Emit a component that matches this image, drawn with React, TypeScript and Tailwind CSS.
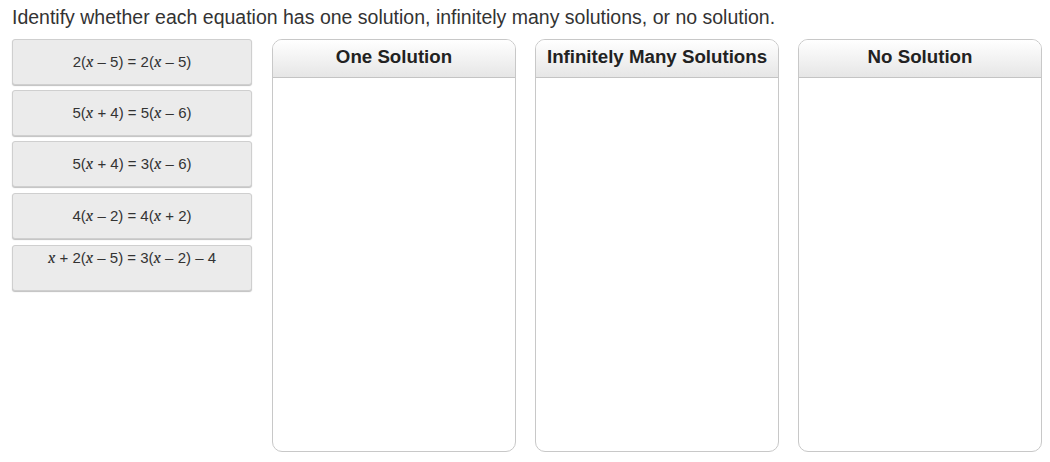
import React from "react";

type Part = string | { v: string };

const X = { v: "x" };

const equations: Part[][] = [
  ["2(", X, " – 5) = 2(", X, " – 5)"],
  ["5(", X, " + 4) = 5(", X, " – 6)"],
  ["5(", X, " + 4) = 3(", X, " – 6)"],
  ["4(", X, " – 2) = 4(", X, " + 2)"],
  [X, " + 2(", X, " – 5) = 3(", X, " – 2) – 4"],
];

const columns = ["One Solution", "Infinitely Many Solutions", "No Solution"];

const Equation: React.FC<{ parts: Part[] }> = ({ parts }) => (
  <span>
    {parts.map((p, i) =>
      typeof p === "string" ? (
        <span key={i}>{p}</span>
      ) : (
        <i key={i} className="font-serif italic text-[16.5px]">
          {p.v}
        </i>
      )
    )}
  </span>
);

const App: React.FC = () => {
  return (
    <div className="w-[1050px] h-[462px] bg-white px-3 pt-[6px] [font-family:'Liberation_Sans',Arial,sans-serif] text-[#333]">
      {/* Prompt */}
      <p className="text-[19.5px] leading-[22px]">
        Identify whether each equation has one solution, infinitely many solutions, or no solution.
      </p>

      <div className="mt-[11px] flex">
        {/* Draggable equation tiles */}
        <div className="flex w-[240px] shrink-0 flex-col gap-[5px]">
          {equations.map((eq, i) => (
            <div
              key={i}
              className={`h-[46px] rounded-[3px] border border-[#cfcfcf] bg-[#ebebeb] text-[15px] shadow-[0_1px_1px_rgba(0,0,0,0.25)] flex justify-center ${
                i === 4 ? "mt-px items-start" : "items-center"
              } ${i === 3 ? "mt-px" : ""}`}
            >
              <Equation parts={eq} />
            </div>
          ))}
        </div>

        {/* Drop targets */}
        <div className="ml-[20px] flex shrink-0 gap-[19px]">
          {columns.map((c) => (
            <div
              key={c}
              className="flex h-[413px] w-[244px] shrink-0 flex-col overflow-hidden rounded-[10px] border border-[#c8c8c8] bg-white"
            >
              <div className="flex h-[38px] items-center justify-center border-b border-[#c4c4c4] bg-gradient-to-b from-white to-[#e6e6e6] pb-[2px] text-[18.7px] font-bold text-[#222]">
                {c}
              </div>
              <div className="flex-1" />
            </div>
          ))}
        </div>
      </div>
    </div>
  );
};

export default App;
